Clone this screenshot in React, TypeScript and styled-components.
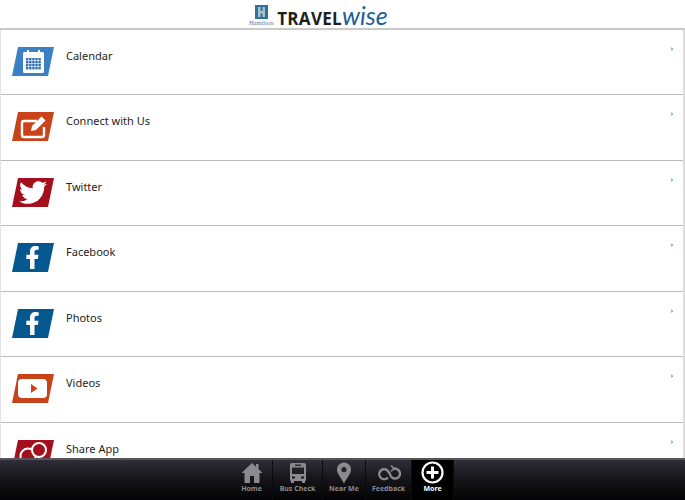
import { ReactNode } from "react";
import styled, { createGlobalStyle } from "styled-components";
import { FaTwitter, FaFacebookF } from "react-icons/fa";

const RED = "#a30f1d";
const ORANGE = "#c9431a";
const NAVY = "#04588f";

const GlobalStyle = createGlobalStyle`
  html, body {
    margin: 0;
    padding: 0;
    background: #fff;
    font-family: "Noto Sans", "Open Sans", sans-serif;
  }
`;

const Page = styled.div`
  display: flex;
  flex-direction: column;
  width: 685px;
  height: 500px;
  overflow: hidden;
`;

const Header = styled.header`
  flex: 0 0 30px;
  box-sizing: border-box;
  display: flex;
  align-items: flex-start;
  justify-content: center;
  gap: 4px;
  padding: 2px 48px 0 0;
  border-bottom: 2px solid #c9c9c9;
`;

const Crest = styled.div`
  display: flex;
  flex-direction: column;
  align-items: center;
  width: 24px;
  margin-top: 3px;
  color: #5f7e96;
  font-family: "Liberation Serif", serif;
  font-size: 6.5px;
  line-height: 7px;
`;

const LogoText = styled.div`
  display: flex;
  align-items: baseline;
  height: 26px;
  font-family: "Open Sans", sans-serif;
  line-height: 26px;
`;

const Travel = styled.span`
  color: #1e1e1e;
  font-size: 17px;
  font-weight: 700;
  letter-spacing: 0.3px;
`;

const Wise = styled.span`
  color: #1c5f94;
  font-family: Lato, sans-serif;
  font-size: 25px;
  font-style: italic;
  font-weight: 400;
`;

const List = styled.main`
  flex: 1;
  overflow: hidden;
  border-left: 1px solid #e2e2e2;
  border-right: 2px solid #dcdcdc;
`;

const Row = styled.div`
  position: relative;
  box-sizing: border-box;
  height: 65.45px;
  display: flex;
  align-items: flex-start;
  gap: 12px;
  padding: 17px 0 0 11px;
  border-bottom: 1px solid #bdbdbd;
`;

const Label = styled.span`
  margin-top: 1px;
  color: #1d1d1d;
  font-size: 11px;
  line-height: 15px;
`;

const Chevron = styled.span`
  position: absolute;
  top: 14px;
  right: 10px;
  color: #222;
  font-size: 7px;
  line-height: 10px;
`;

const TabBar = styled.nav`
  flex: 0 0 42px;
  box-sizing: border-box;
  display: flex;
  justify-content: center;
  border-top: 2px solid #55555a;
  background: linear-gradient(#302e38, #17161b 45%, #020203);
`;

const Tab = styled.div<{ $active?: boolean; $width: number }>`
  width: ${(p) => p.$width}px;
  box-sizing: border-box;
  display: flex;
  flex-direction: column;
  align-items: center;
  padding-top: 1px;
  border-right: 1px solid #0b0b0e;
  color: ${(p) => (p.$active ? "#fff" : "#8b8b8f")};
  background: ${(p) => (p.$active ? "#000" : "transparent")};
`;

const TabIcon = styled.div`
  height: 23px;
  display: flex;
  align-items: center;
  justify-content: center;
`;

const TabLabel = styled.span`
  font-size: 7px;
  font-weight: 700;
  line-height: 10px;
  white-space: nowrap;
`;

const Badge = ({ color, children }: { color: string; children: ReactNode }) => (
  <svg width="42" height="29" viewBox="0 0 42 29" style={{ flex: "none" }}>
    <polygon points="6,0 42,0 36,29 0,29" fill={color} />
    {children}
  </svg>
);

const CalendarGlyph = () => (
  <g>
    <rect x="11" y="5" width="21" height="21" rx="1.5" fill="#fff" />
    <rect x="15" y="3" width="2" height="4" fill="#fff" />
    <rect x="26" y="3" width="2" height="4" fill="#fff" />
    {[0, 1, 2, 3].map((r) =>
      [0, 1, 2, 3, 4].map((c) => (
        <rect key={`${r}-${c}`} x={14 + c * 3.1} y={11 + r * 3} width="2.4" height="2.4" fill="#2a6db5" />
      ))
    )}
  </g>
);

const EditGlyph = () => (
  <g>
    <path d="M25 9H12a2 2 0 0 0-2 2v12a2 2 0 0 0 2 2h18a2 2 0 0 0 2-2V15" fill="none" stroke="#fff" strokeWidth="2.4" />
    <path d="M19 19l1-5 9.500-9.500 4 4L24 18z" fill="#fff" />
  </g>
);

const VideoGlyph = () => (
  <g>
    <rect x="6" y="5" width="29" height="19" rx="4" fill="#fff" />
    <polygon points="19,10 25.500,14.500 19,19" fill={ORANGE} />
  </g>
);

const ShareGlyph = () => (
  <g stroke="#fff" strokeWidth="2">
    <circle cx="16" cy="16" r="7.500" fill="none" />
    <circle cx="27" cy="10" r="7" fill={RED} />
  </g>
);

const items = [
  { label: "Calendar", color: "#3b7fc4", glyph: <CalendarGlyph /> },
  { label: "Connect with Us", color: ORANGE, glyph: <EditGlyph /> },
  { label: "Twitter", color: RED, glyph: <FaTwitter x="7" y="0.500" size="28" color="#fff" /> },
  { label: "Facebook", color: NAVY, glyph: <FaFacebookF x="9" y="3" size="23" color="#fff" /> },
  { label: "Photos", color: NAVY, glyph: <FaFacebookF x="9" y="3" size="23" color="#fff" /> },
  { label: "Videos", color: ORANGE, glyph: <VideoGlyph /> },
  { label: "Share App", color: RED, glyph: <ShareGlyph /> },
];

const HomeIcon = () => (
  <svg width="22" height="22" viewBox="0 0 22 22" fill="currentColor">
    <path d="M11 1L0.500 11H3.500V21H9V14H13V21H18.500V11H21.500L17.500 7V2H15V4.800Z" />
  </svg>
);

const BusIcon = () => (
  <svg width="18" height="22" viewBox="0 0 18 22" fill="currentColor">
    <path
      fillRule="evenodd"
      d="M3 1h12a2 2 0 0 1 2 2v15a1 1 0 0 1-1 1v2h-3v-2H5v2H2v-2a1 1 0 0 1-1-1V3a2 2 0 0 1 2-2zM6 2.500v1.500h6V2.500zM3 5.500v6.500h12V5.500zM3 14.500v2h3v-2zM12 14.500v2h3v-2z"
    />
  </svg>
);

const PinIcon = () => (
  <svg width="16" height="22" viewBox="0 0 16 22" fill="currentColor">
    <path
      fillRule="evenodd"
      d="M8 0.500a7 7 0 0 1 7 7c0 4.500-4.500 9-7 14-2.500-5-7-9.500-7-14a7 7 0 0 1 7-7zM8 5a2.600 2.600 0 1 0 0 5.200A2.600 2.600 0 0 0 8 5z"
    />
  </svg>
);

const FeedbackIcon = () => (
  <svg width="24" height="18" viewBox="0 0 24 18" fill="none" stroke="currentColor" strokeWidth="2.400">
    <path d="M11 13.500a5 5 0 1 1-1-7.500L13 10a5 5 0 1 0 3-5" />
    <path d="M14 1.500l3 3-3 3" strokeWidth="1.600" />
  </svg>
);

const MoreIcon = () => (
  <svg width="23" height="23" viewBox="0 0 23 23" fill="none" stroke="#fff">
    <circle cx="11.500" cy="11.500" r="10" strokeWidth="2.200" />
    <path d="M11.500 5.500v12M5.500 11.500h12" strokeWidth="3" />
  </svg>
);

const tabs = [
  { label: "Home", width: 42, icon: <HomeIcon /> },
  { label: "Bus Check", width: 50, icon: <BusIcon /> },
  { label: "Near Me", width: 43, icon: <PinIcon /> },
  { label: "Feedback", width: 46, icon: <FeedbackIcon /> },
  { label: "More", width: 42, icon: <MoreIcon />, active: true },
];

export default function App() {
  return (
    <Page>
      <GlobalStyle />
      <Header>
        <Crest>
          <svg width="13" height="14" viewBox="0 0 13 14">
            <rect width="13" height="14" fill="#2f7396" />
            <path d="M3 2h2.500v4h2V2H10v10H7.500V8.500h-2V12H3z" fill="#a9c1cb" />
          </svg>
          <span>Hamilton</span>
        </Crest>
        <LogoText>
          <Travel>TRAVEL</Travel>
          <Wise>wise</Wise>
        </LogoText>
      </Header>
      <List>
        {items.map((item) => (
          <Row key={item.label}>
            <Badge color={item.color}>{item.glyph}</Badge>
            <Label>{item.label}</Label>
            <Chevron>›</Chevron>
          </Row>
        ))}
      </List>
      <TabBar>
        {tabs.map((tab) => (
          <Tab key={tab.label} $width={tab.width} $active={tab.active}>
            <TabIcon>{tab.icon}</TabIcon>
            <TabLabel>{tab.label}</TabLabel>
          </Tab>
        ))}
      </TabBar>
    </Page>
  );
}
